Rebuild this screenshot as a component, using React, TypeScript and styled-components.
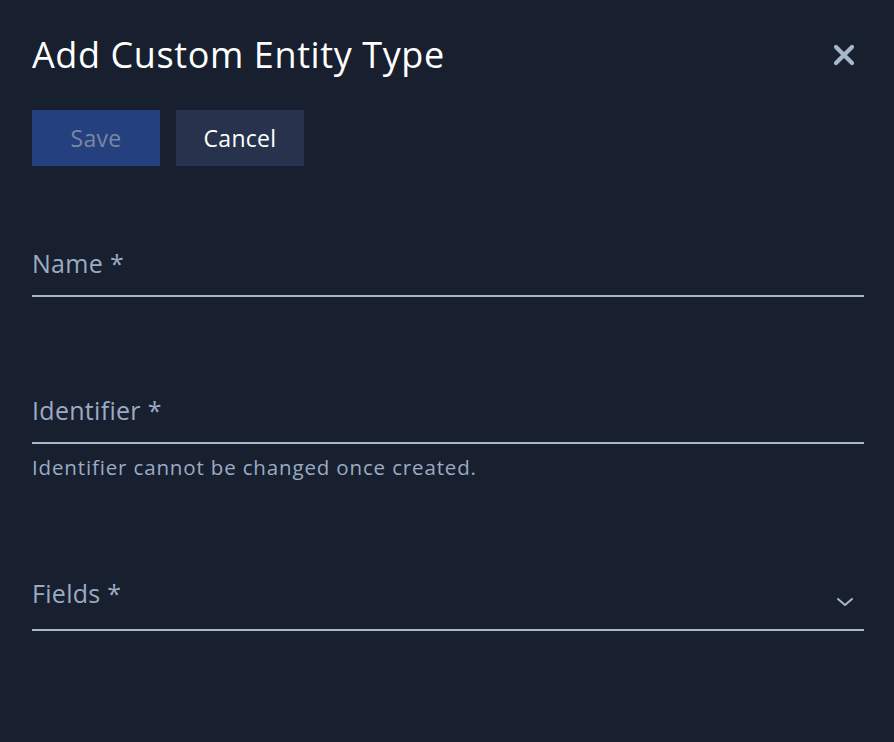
import React from "react";
import styled, { createGlobalStyle } from "styled-components";

const Global = createGlobalStyle`
  html, body { margin: 0; padding: 0; background: #181f2f; }
  body { font-family: "Open Sans", Lato, sans-serif; -webkit-font-smoothing: antialiased; }
  * { box-sizing: border-box; }
`;

const Panel = styled.div`
  width: 894px;
  height: 742px;
  background: #181f2f;
  padding: 32px 30px 0 32px;
  display: flex;
  flex-direction: column;
`;

const Header = styled.div`
  display: flex;
  align-items: center;
  justify-content: space-between;
  height: 46px;
`;

const Title = styled.h1`
  margin: 0;
  font-size: 36px;
  font-weight: 400;
  color: #ffffff;
  line-height: 46px;
  letter-spacing: 0.6px;
`;

const CloseButton = styled.button`
  background: none;
  border: none;
  padding: 0;
  margin-right: 8px;
  width: 24px;
  height: 24px;
  display: flex;
  align-items: center;
  justify-content: center;
  cursor: pointer;
`;

const Actions = styled.div`
  display: flex;
  gap: 16px;
  margin-top: 32px;
`;

const Button = styled.button<{ $primary?: boolean }>`
  width: 128px;
  height: 56px;
  border: none;
  font-family: inherit;
  font-size: 23px;
  letter-spacing: 0.3px;
  background: ${(p) => (p.$primary ? "#25407e" : "#27334d")};
  color: ${(p) => (p.$primary ? "#7a87a2" : "#ffffff")};
`;

const Field = styled.div<{ $gap: number; $pad?: number }>`
  margin-top: ${(p) => p.$gap}px;
  display: flex;
  align-items: center;
  justify-content: space-between;
  padding-bottom: ${(p) => p.$pad ?? 16}px;
  border-bottom: 2px solid #a7b6ca;
`;

const Label = styled.label`
  font-size: 25px;
  line-height: 32px;
  letter-spacing: 0.3px;
  color: #9aabc3;
`;

const Helper = styled.div`
  margin-top: 11px;
  font-size: 20.5px;
  line-height: 24px;
  letter-spacing: 0.85px;
  color: #9aabc3;
`;

const Chevron = styled.span`
  display: flex;
  margin-right: 10px;
  margin-top: 18px;
`;

export default function App() {
  return (
    <>
      <Global />
      <Panel>
        <Header>
          <Title>Add Custom Entity Type</Title>
          <CloseButton aria-label="Close">
            <svg width="22" height="22" viewBox="0 0 22 22">
              <path d="M3 3 L19 19 M19 3 L3 19" stroke="#a8b8cc" strokeWidth="4.2" strokeLinecap="round" />
            </svg>
          </CloseButton>
        </Header>
        <Actions>
          <Button $primary>Save</Button>
          <Button>Cancel</Button>
        </Actions>
        <Field $gap={81}>
          <Label>Name *</Label>
        </Field>
        <Field $gap={97}>
          <Label>Identifier *</Label>
        </Field>
        <Helper>Identifier cannot be changed once created.</Helper>
        <Field $gap={98} $pad={20}>
          <Label>Fields *</Label>
          <Chevron>
            <svg width="18" height="10" viewBox="0 0 18 10">
              <path d="M2 2 L9 8 L16 2" stroke="#a8b8cc" strokeWidth="2" fill="none" strokeLinecap="round" strokeLinejoin="round" />
            </svg>
          </Chevron>
        </Field>
      </Panel>
    </>
  );
}
